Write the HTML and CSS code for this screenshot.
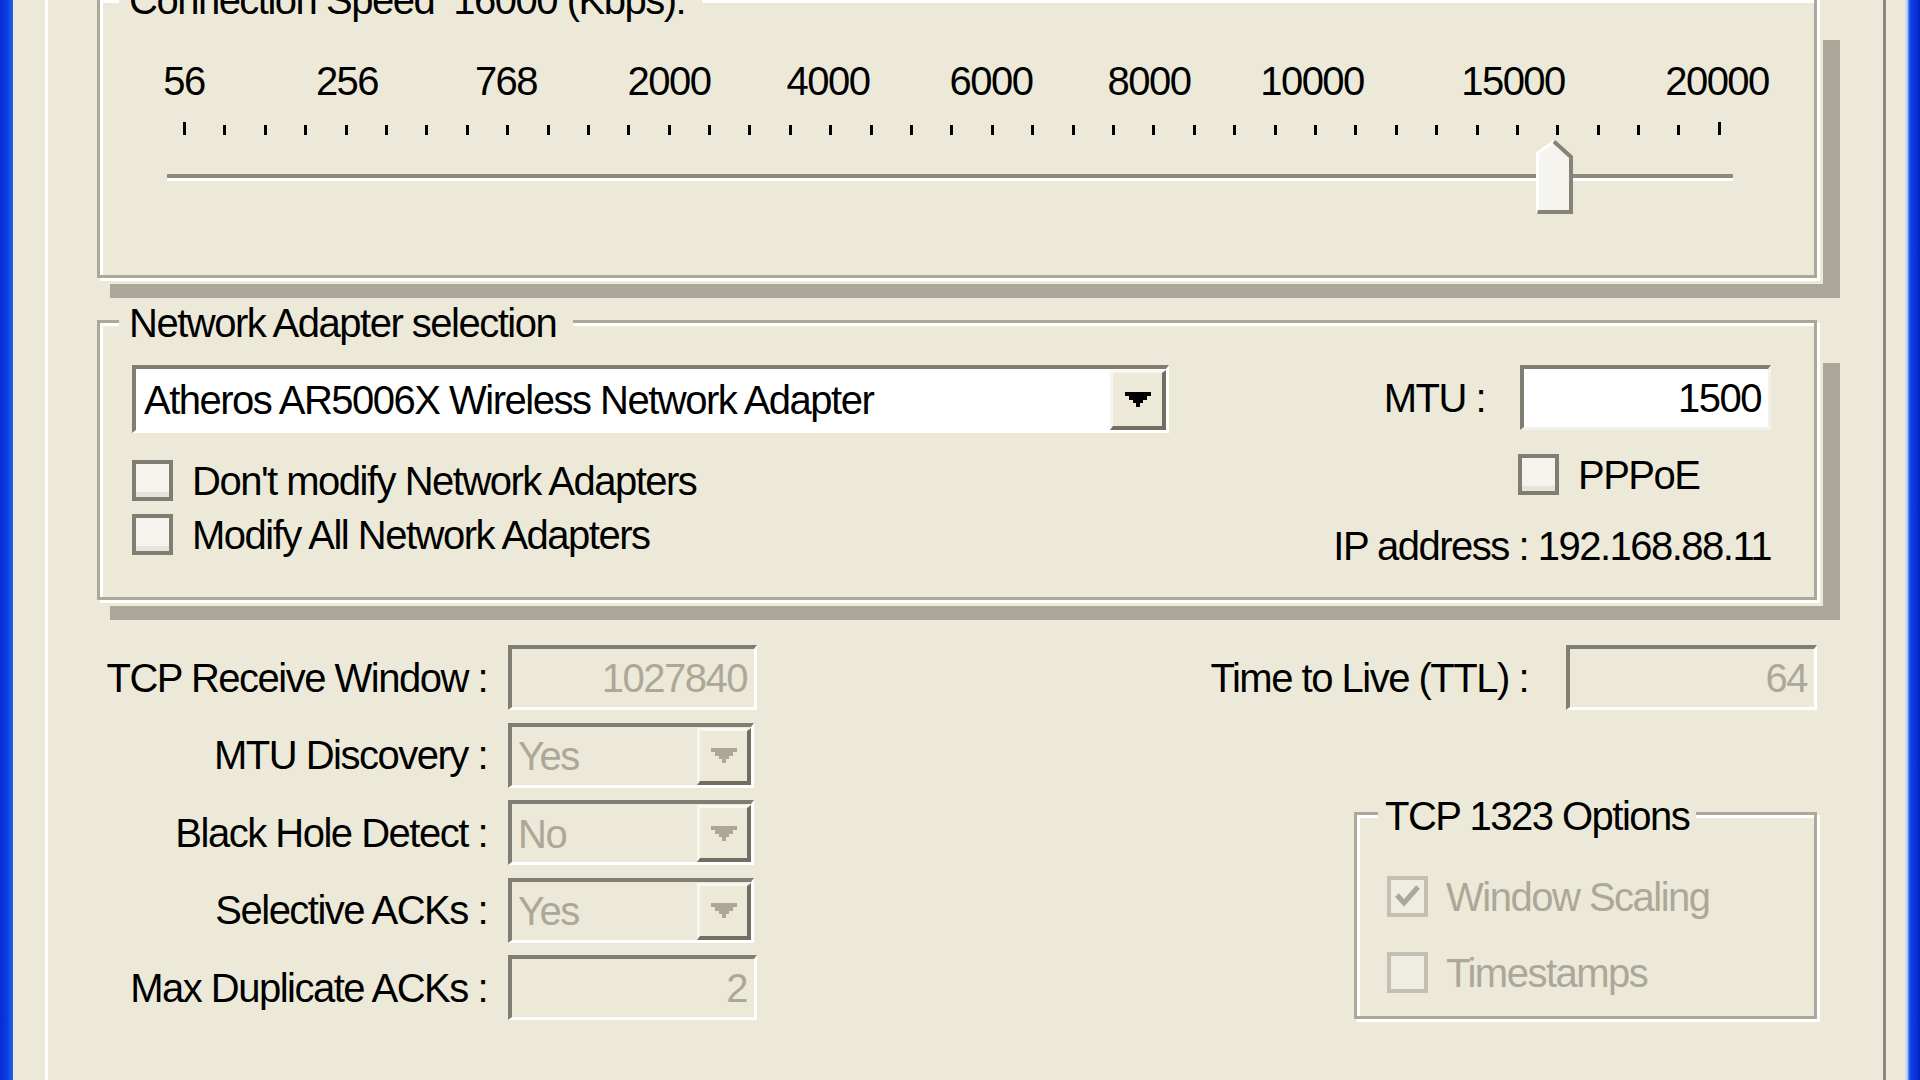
FILE: index.html
```html
<!DOCTYPE html>
<html lang="en">
<head>
<meta charset="utf-8">
<title>TCP Optimizer</title>
<link rel="stylesheet" href="styles.css">
</head>
<body>
<div class="frame">
  <div class="edge edge-left"></div>
  <div class="dialog">
    <div class="page">

      <section class="group group-shadow group-speed">
        <span class="group-title">Connection Speed&nbsp; 16000 (Kbps):</span>
        <div class="scale-labels">
          <span class="scale-label" style="left:84px">56</span>
          <span class="scale-label" style="left:247px">256</span>
          <span class="scale-label" style="left:406px">768</span>
          <span class="scale-label" style="left:569px">2000</span>
          <span class="scale-label" style="left:728px">4000</span>
          <span class="scale-label" style="left:891px">6000</span>
          <span class="scale-label" style="left:1049px">8000</span>
          <span class="scale-label" style="left:1212px">10000</span>
          <span class="scale-label" style="left:1413px">15000</span>
          <span class="scale-label" style="left:1617px">20000</span>
        </div>
        <div class="ticks">
          <i class="tick tick-end"></i><i class="tick"></i><i class="tick"></i><i class="tick"></i><i class="tick"></i><i class="tick"></i><i class="tick"></i><i class="tick"></i><i class="tick"></i><i class="tick"></i>
          <i class="tick"></i><i class="tick"></i><i class="tick"></i><i class="tick"></i><i class="tick"></i><i class="tick"></i><i class="tick"></i><i class="tick"></i><i class="tick"></i><i class="tick"></i>
          <i class="tick"></i><i class="tick"></i><i class="tick"></i><i class="tick"></i><i class="tick"></i><i class="tick"></i><i class="tick"></i><i class="tick"></i><i class="tick"></i><i class="tick"></i>
          <i class="tick"></i><i class="tick"></i><i class="tick"></i><i class="tick"></i><i class="tick"></i><i class="tick"></i><i class="tick"></i><i class="tick"></i><i class="tick tick-end"></i>
        </div>
        <div class="track"></div>
        <svg class="thumb" width="37" height="74" viewBox="0 0 37 74">
          <polygon points="1.5,13 18,1.5 35,18 35,72 1.5,72" fill="#F5F4EF"/>
          <polyline points="1.5,72 1.5,13 18,1.5" fill="none" stroke="#FFFFFF" stroke-width="3"/>
          <polyline points="18,1.5 35,17 35,72 1.5,72" fill="none" stroke="#85837A" stroke-width="4"/>
        </svg>
      </section>

      <section class="group group-shadow group-adapter">
        <span class="group-title">Network Adapter selection</span>
        <div class="adapter-body">
          <div class="adapter-left">
            <div class="combo combo-large">
              <span class="combo-text">Atheros AR5006X Wireless Network Adapter</span>
              <span class="combo-btn">
                <svg width="26" height="15" viewBox="0 0 26 15"><path d="M0 0H26V4H22V8H18V11H15V15H11V11H8V8H4V4H0Z" fill="#000"/></svg>
              </span>
            </div>
            <div class="check-row check-first"><span class="cb"></span><span>Don't modify Network Adapters</span></div>
            <div class="check-row check-second"><span class="cb"></span><span>Modify All Network Adapters</span></div>
          </div>
          <div class="adapter-right">
            <span class="mtu-label">MTU :</span>
            <div class="input input-enabled input-251">1500</div>
            <div class="check-row pppoe"><span class="cb"></span><span>PPPoE</span></div>
            <div class="ip">IP address : 192.168.88.11</div>
          </div>
        </div>
      </section>

      <div class="lower">
        <div class="params">
          <span class="param-label">TCP Receive Window :</span>
          <div class="input input-disabled input-249">1027840</div>

          <span class="param-label">MTU Discovery :</span>
          <div class="combo combo-small">
            <span class="combo-text">Yes</span>
            <span class="combo-btn combo-btn-small">
              <svg width="26" height="15" viewBox="0 0 26 15"><path d="M0 0H26V4H22V8H18V11H15V15H11V11H8V8H4V4H0Z" fill="#ACA899"/></svg>
            </span>
          </div>

          <span class="param-label">Black Hole Detect :</span>
          <div class="combo combo-small">
            <span class="combo-text">No</span>
            <span class="combo-btn combo-btn-small">
              <svg width="26" height="15" viewBox="0 0 26 15"><path d="M0 0H26V4H22V8H18V11H15V15H11V11H8V8H4V4H0Z" fill="#ACA899"/></svg>
            </span>
          </div>

          <span class="param-label">Selective ACKs :</span>
          <div class="combo combo-small">
            <span class="combo-text">Yes</span>
            <span class="combo-btn combo-btn-small">
              <svg width="26" height="15" viewBox="0 0 26 15"><path d="M0 0H26V4H22V8H18V11H15V15H11V11H8V8H4V4H0Z" fill="#ACA899"/></svg>
            </span>
          </div>

          <span class="param-label">Max Duplicate ACKs :</span>
          <div class="input input-disabled input-249">2</div>
        </div>

        <div class="lower-right">
          <div class="ttl-row">
            <span>Time to Live (TTL) :</span>
            <div class="input input-disabled input-251">64</div>
          </div>
          <section class="group group-rfc">
            <span class="group-title group-title-rfc">TCP 1323 Options</span>
            <div class="check-row disabled">
              <span class="cb cb-disabled">
                <svg width="33" height="33" viewBox="0 0 33 33"><polyline points="6,15 13,23 27,7" fill="none" stroke="#ACA899" stroke-width="5"/></svg>
              </span>
              <span>Window Scaling</span>
            </div>
            <div class="check-row disabled rfc-second"><span class="cb cb-disabled"></span><span>Timestamps</span></div>
          </section>
        </div>
      </div>

    </div>
  </div>
  <div class="edge edge-right"></div>
</div>
</body>
</html>
```

FILE: styles.css
```css
* {
  box-sizing: border-box;
  margin: 0;
  padding: 0;
}

html, body {
  width: 1920px;
  height: 1080px;
  overflow: hidden;
}

body {
  background: #ECE9D8;
  font-family: "Liberation Sans", Arial, sans-serif;
  font-size: 40px;
  line-height: 40px;
  letter-spacing: -1.5px;
  color: #000;
}

.frame {
  display: flex;
  width: 1920px;
  height: 1080px;
}

.edge {
  flex: none;
  height: 100%;
}

.edge-left {
  width: 13px;
  background: linear-gradient(to right, #0A2BD1 0%, #0C3BE3 55%, #2462EE 100%);
}

.edge-right {
  width: 15px;
  background: linear-gradient(to right, #CBDBF6 0, #CBDBF6 2px, #2C66EE 4px, #0B3FE2 40%, #0831D9 75%, #0021C2 100%);
}

.dialog {
  flex: 1;
  display: flex;
  background: #ECE9D8;
  padding: 0 19px 0 32px;
}

.page {
  width: 1841px;
  height: 100%;
  border-left: 3px solid #FDFDFA;
  border-right: 3px solid #8A887C;
  padding: 0 66px 0 49px;
  position: relative;
  z-index: 0;
}

/* group boxes */
.group {
  position: relative;
  background: #ECE9D8;
  border: 3px solid #ACA899;
  box-shadow: inset 3px 3px 0 #FFFFFF, 3px 3px 0 #FFFFFF, 0 0 0 6px #ECE9D8;
}

.group-shadow::before {
  content: "";
  position: absolute;
  left: 10px;
  top: 40px;
  right: -26px;
  bottom: -23px;
  background: #ACA899;
  z-index: -1;
}

.group-title {
  position: absolute;
  top: -20px;
  left: 19px;
  padding: 0 17px 0 10px;
  background: #ECE9D8;
  white-space: nowrap;
}

.group-speed {
  margin-top: -3px;
  height: 281px;
}

/* slider */
.scale-labels {
  position: relative;
  height: 40px;
  margin-top: 61px;
}

.scale-label {
  position: absolute;
  top: 0;
  transform: translateX(-50%);
}

.ticks {
  display: flex;
  justify-content: space-between;
  align-items: flex-end;
  width: 1538px;
  height: 13px;
  margin: 21px 0 0 83px;
}

.tick {
  display: block;
  width: 3px;
  height: 10px;
  background: #000;
}

.tick-end {
  height: 13px;
}

.track {
  width: 1566px;
  height: 7px;
  margin: 39px 0 0 67px;
  border-top: 4px solid #8C8A7D;
  background: #FFFFFF;
}

.thumb {
  position: absolute;
  left: 1436px;
  top: 140px;
}

/* adapter group */
.group-adapter {
  margin-top: 42px;
  height: 280px;
  padding: 42px 43px 0 32px;
}

.adapter-body {
  display: flex;
  justify-content: space-between;
  align-items: flex-start;
}

.adapter-left {
  display: flex;
  flex-direction: column;
  align-items: flex-start;
}

.adapter-right {
  display: grid;
  grid-template-columns: auto 251px;
  column-gap: 35px;
  align-items: center;
}

.mtu-label {
  justify-self: end;
}

.pppoe {
  grid-column: 2;
  justify-self: start;
  margin-top: 24px;
  margin-left: -2px;
}

.ip {
  grid-column: 1 / -1;
  justify-self: end;
  margin-top: 31px;
  white-space: nowrap;
}

/* check boxes */
.check-row {
  display: flex;
  align-items: center;
  gap: 19px;
  height: 41px;
  white-space: nowrap;
}

.check-first {
  margin-top: 27px;
}

.check-second {
  margin-top: 13px;
}

.cb {
  flex: none;
  width: 41px;
  height: 41px;
  border: 4px solid #807E72;
  background: #F4F3EE;
  box-shadow: inset 0 -5px 0 #E6E4DA;
}

.cb-disabled {
  border-color: #C3C0B1;
  background: #EEECE3;
  box-shadow: none;
}

.cb-disabled svg {
  display: block;
}

.disabled {
  color: #ACA899;
}

/* inputs and combos */
.input {
  display: flex;
  align-items: center;
  justify-content: flex-end;
  height: 65px;
  padding: 0 7px;
  border-style: solid;
  border-width: 4px 3px 3px 4px;
  border-color: #807E72 #FFFFFF #FFFFFF #807E72;
  white-space: nowrap;
}

.input-enabled {
  background: #FFFFFF;
  border-right-color: #F2F1EB;
  border-bottom-color: #F2F1EB;
}

.input-disabled {
  background: #ECE9D8;
  color: #ACA899;
}

.input-249 {
  width: 249px;
}

.input-251 {
  width: 251px;
}

.combo {
  display: flex;
  padding-top: 1px;
  border-style: solid;
  border-width: 4px 3px 3px 4px;
  border-color: #807E72 #FFFFFF #FFFFFF #807E72;
}

.combo-large {
  width: 1037px;
  height: 68px;
  background: #FFFFFF;
}

.combo-small {
  width: 246px;
  height: 65px;
  background: #ECE9D8;
  color: #ACA899;
}

.combo-text {
  flex: 1;
  display: flex;
  align-items: center;
  padding-left: 8px;
  white-space: nowrap;
  overflow: hidden;
}

.combo-small .combo-text {
  padding-left: 6px;
}

.combo-btn {
  flex: none;
  width: 56px;
  display: flex;
  align-items: center;
  justify-content: center;
  background: #ECE9D8;
  border-style: solid;
  border-width: 3px 4px 4px 3px;
  border-color: #F7F6F1 #716F64 #716F64 #F7F6F1;
}

.combo-btn-small {
  width: 54px;
}

.combo-btn svg {
  display: block;
}

/* lower area */
.lower {
  display: flex;
  justify-content: space-between;
  align-items: flex-start;
  margin-top: 45px;
}

.params {
  display: grid;
  grid-template-columns: 390px auto;
  grid-auto-rows: 65px;
  column-gap: 21px;
  row-gap: 12.5px;
  align-items: center;
}

.param-label {
  text-align: right;
  white-space: nowrap;
}

.lower-right {
  display: flex;
  flex-direction: column;
  align-items: flex-end;
}

.ttl-row {
  display: flex;
  align-items: center;
  gap: 38px;
  white-space: nowrap;
}

.group-rfc {
  width: 463px;
  height: 207px;
  margin-top: 102px;
  padding: 61px 0 0 30px;
}

.group-title-rfc {
  left: 21px;
  top: -19px;
  padding: 0 7px;
}

.group-rfc .check-row {
  gap: 18px;
}

.rfc-second {
  margin-top: 35px;
}
```
